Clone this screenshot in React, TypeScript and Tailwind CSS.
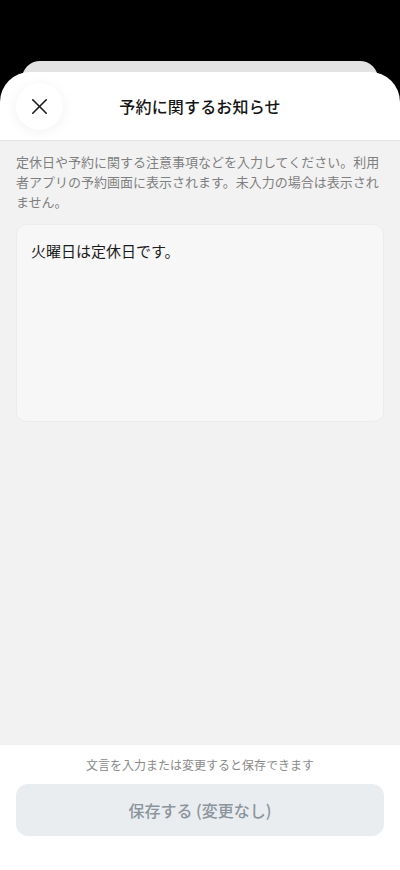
import { X } from "lucide-react";

const FONT = { fontFamily: '"Noto Sans CJK JP", "Noto Sans", sans-serif' };

export default function App() {
  return (
    <div className="h-[870px] w-full bg-black flex flex-col overflow-hidden" style={FONT}>
      {/* spacer above the stacked sheets */}
      <div className="h-[61px] shrink-0" />

      {/* sheet stacked behind */}
      <div className="mx-[22px] h-[24px] -mb-[13px] shrink-0 rounded-t-[18px] bg-[#e3e3e3]" />

      {/* main sheet */}
      <div className="relative flex-1 min-h-0 flex flex-col bg-white rounded-t-[30px] overflow-hidden">
        {/* Header */}
        <div className="h-[69px] shrink-0 grid grid-cols-[1fr_auto_1fr] items-center px-4 border-b border-[#e4e4e4]">
          <div className="flex items-center">
            <button className="w-[47px] h-[47px] rounded-full bg-white flex items-center justify-center shadow-[0_2px_14px_rgba(0,0,0,0.06)]">
              <X className="w-[27px] h-[27px] text-[#1a1a1a]" strokeWidth={1.4} />
            </button>
          </div>
          <h1 className="text-[16px] font-medium text-[#151515] tracking-[0.01em]">予約に関するお知らせ</h1>
          <div />
        </div>

        {/* Body */}
        <div className="flex-1 min-h-0 bg-[#f2f2f2] px-4 pt-[11px]">
          <p className="text-[13px] leading-[20px] text-[#7f7f7f]">
            定休日や予約に関する注意事項などを入力してください。利用者アプリの予約画面に表示されます。未入力の場合は表示されません。
          </p>
          <div className="mt-[12px] h-[198px] rounded-[10px] bg-[#f7f7f7] border border-[#ececec] px-[14px] pt-[15px]">
            <p className="text-[15px] leading-[22px] text-[#1c1c1c]">火曜日は定休日です。</p>
          </div>
        </div>

        {/* Footer */}
        <div className="h-[125px] shrink-0 bg-white px-4 pt-[11px] flex flex-col">
          <p className="text-[12px] leading-[18px] text-center text-[#8a8a8a]">文言を入力または変更すると保存できます</p>
          <button className="mt-[10px] h-[52px] w-full rounded-[12px] bg-[#e9edf0] text-[16px] font-medium text-[#8c959d]">
            保存する (変更なし)
          </button>
        </div>
      </div>
    </div>
  );
}
